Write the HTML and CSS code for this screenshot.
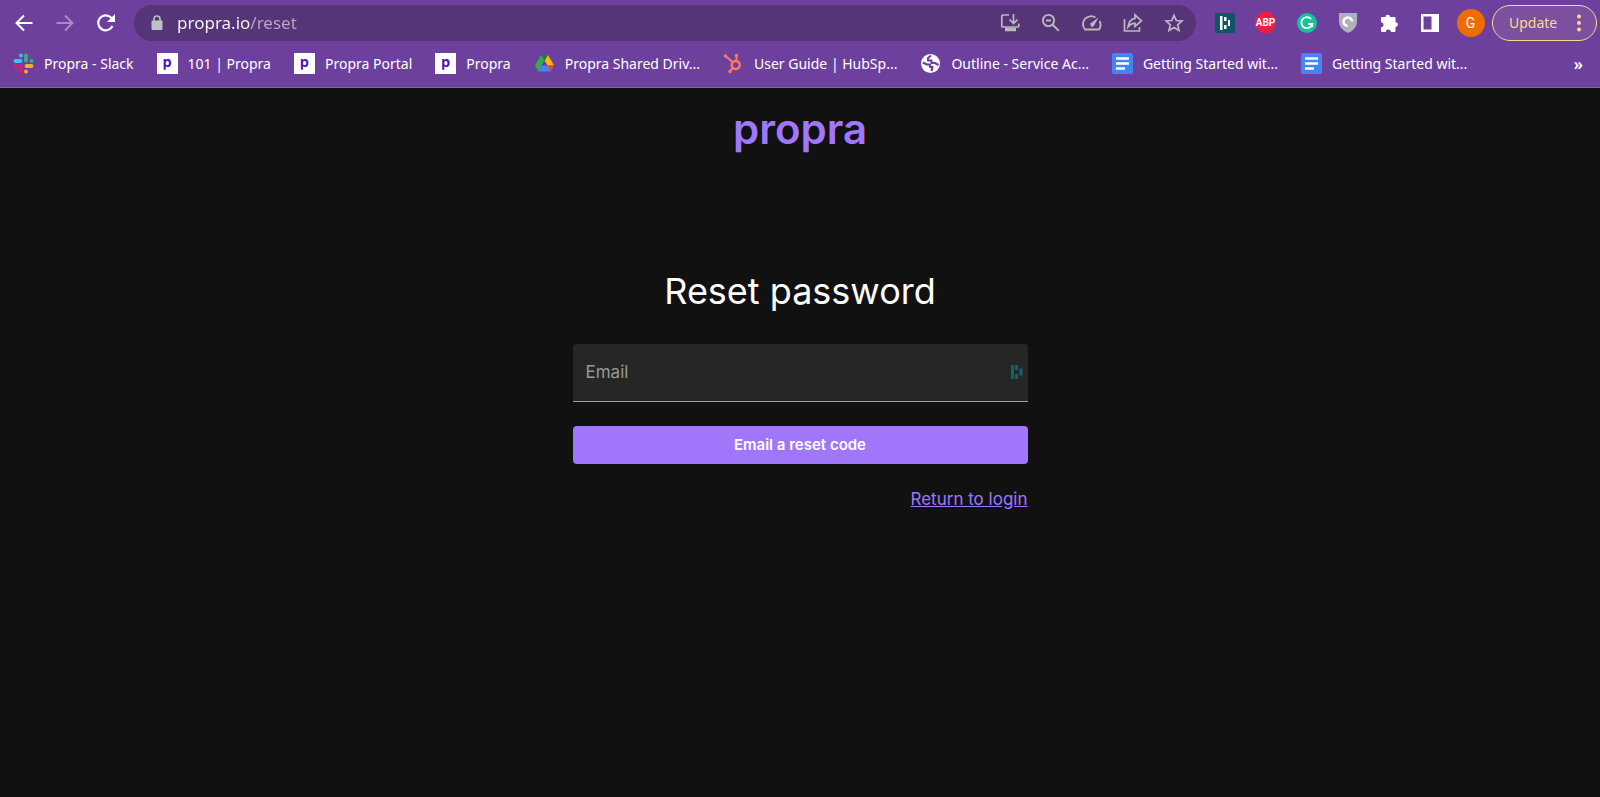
FILE: index.html
```html
<!DOCTYPE html>
<html lang="en">
  <head>
    <meta charset="UTF-8" />
    <meta name="viewport" content="width=device-width, initial-scale=1.0" />
    <title>Reset password</title>
    <link rel="stylesheet" href="styles.css">
  </head>
  <body>
    <header class="browser">
      <div class="toolbar">
        <nav class="nav-buttons">
          <button class="icon-button" aria-label="Back">
            <svg width="20" height="20" viewBox="0 0 20 20" fill="none" stroke="#fff" stroke-width="2"><path d="M18.500 10H3M10 2.500L2.500 10L10 17.500" /></svg>
          </button>
          <button class="icon-button" aria-label="Forward">
            <svg width="20" height="20" viewBox="0 0 20 20" fill="none" stroke="#a98cc5" stroke-width="2"><path d="M1.500 10H17M10 2.500L17.500 10L10 17.500" /></svg>
          </button>
          <button class="icon-button" aria-label="Reload">
            <svg width="20" height="20" viewBox="0 0 20 20"><path d="M16.500 13A7.500 7.500 0 1 1 15 4.500L17 6.500" fill="none" stroke="#fff" stroke-width="2.200" /><path d="M19 1v8h-8z" fill="#fff" /></svg>
          </button>
        </nav>

        <div class="address-bar">
          <svg class="lock" width="12" height="16" viewBox="0 0 12 16"><rect x="0.500" y="5.500" width="11" height="9.500" rx="1" fill="#bdc1c6" /><path d="M3 6V4a3 3 0 0 1 6 0v2" fill="none" stroke="#bdc1c6" stroke-width="1.600" /></svg>
          <input class="address" type="text" aria-label="Address" value="propra.io/reset" />
          <button class="icon-button" aria-label="Install">
            <svg width="20" height="20" viewBox="0 0 20 20" fill="none" stroke="#bcb8c0" stroke-width="1.700"><path d="M9 2H3Q1.800 2 1.800 3.200V13Q1.800 14 3 14H17.500Q18.800 14 18.800 13V10.500M13.500 1v9M9.500 6.500l4 4 4-4" /><path d="M5 16.500h11" stroke-width="3.500" /></svg>
          </button>
          <button class="icon-button" aria-label="Zoom">
            <svg width="20" height="20" viewBox="0 0 20 20" fill="none" stroke="#bcb8c0" stroke-width="1.900"><circle cx="7.500" cy="7.500" r="5.600" /><path d="M11.500 11.500l6.300 6.300M5 7.500h5" /></svg>
          </button>
          <button class="icon-button" aria-label="Performance">
            <svg width="20" height="20" viewBox="0 0 20 20"><path d="M13.500 4.600A8 8 0 0 0 3 16.500H17A8 8 0 0 0 17.500 8" fill="none" stroke="#bcb8c0" stroke-width="1.800" /><path d="M16.500 4.500L11.800 13a2 2 0 0 1-3-2.700z" fill="#bcb8c0" /></svg>
          </button>
          <button class="icon-button" aria-label="Share">
            <svg width="20" height="20" viewBox="0 0 20 20" fill="none" stroke="#bcb8c0" stroke-width="1.700"><path d="M1.500 6v12h15v-4M12 2l6.500 5.700L12 13.400V10.300C9 10.200 7 11.400 5 14C5.600 9.800 7.500 6 12 5.300z" /></svg>
          </button>
          <button class="icon-button" aria-label="Bookmark">
            <svg width="20" height="20" viewBox="0 0 20 20" fill="none" stroke="#bcb8c0" stroke-width="1.700"><path d="M10 2.300l2.300 5.200 5.700.5-4.300 3.800 1.300 5.600-5-3-5 3 1.300-5.600L2 8l5.700-.5z" /></svg>
          </button>
        </div>

        <div class="extensions">
          <button class="icon-button" aria-label="Dashlane">
            <svg width="20" height="20" viewBox="0 0 20 20"><rect width="20" height="20" rx="1.500" fill="#0e5566" /><path d="M5 3h2.500v14H5zM9 4h2.500v4H9zM9 12h2.500v4H9zM13 7h2v6h-2z" fill="#fff" /></svg>
          </button>
          <button class="icon-button adblock" aria-label="Adblock Plus"><span>ABP</span></button>
          <button class="icon-button" aria-label="Grammarly">
            <svg width="20" height="20" viewBox="0 0 20 20"><circle cx="10" cy="10" r="10" fill="#15c39a" /><path d="M14 6A5.500 5.500 0 1 0 15.200 11H11M15.200 10.500V14" fill="none" stroke="#fff" stroke-width="1.900" /></svg>
          </button>
          <button class="icon-button" aria-label="Shield">
            <svg width="20" height="20" viewBox="0 0 20 20"><path d="M1 0h18v9q0 7-9 11Q1 16 1 9z" fill="#adb1b9" /><path d="M14 8.500A4.200 4.200 0 1 0 9.500 12.800" fill="none" stroke="#fff" stroke-width="2.500" /></svg>
          </button>
          <button class="icon-button" aria-label="Extensions">
            <svg width="20" height="20" viewBox="0 0 20 20"><path d="M6.500 4a2.300 2.300 0 1 1 4.600 0h4.400q1 0 1 1v4.200a2.400 2.400 0 1 1 0 4.800v4q0 1-1 1h-3.700a2.500 2.500 0 0 0-5 0H3q-1 0-1-1v-3.700a2.500 2.500 0 0 0 0-5V5q0-1 1-1z" fill="#fff" /></svg>
          </button>
          <button class="icon-button" aria-label="Side panel">
            <svg width="20" height="20" viewBox="0 0 20 20"><path d="M1 1h18v18H1zM3.500 3.500v13h8v-13z" fill="#fff" fill-rule="evenodd" /></svg>
          </button>
          <button class="icon-button profile" aria-label="Profile"><span>G</span></button>
        </div>

        <button class="update">
          <span>Update</span>
          <svg width="6" height="18" viewBox="0 0 6 18" fill="#fbd990"><circle cx="3" cy="2.500" r="2" /><circle cx="3" cy="9" r="2" /><circle cx="3" cy="15.500" r="2" /></svg>
        </button>
      </div>

      <nav class="bookmarks">
        <a class="bookmark" href="#">
          <svg width="21" height="21" viewBox="0 0 21 21" fill="none" stroke-width="3.800" stroke-linecap="round"><path d="M2.500 8h5M8 2.500v0" stroke="#36c5f0" /><path d="M13 2.500v5M18.500 8v0" stroke="#2eb67d" /><path d="M13.500 13h5M13 18.500v0" stroke="#ecb22e" /><path d="M8 13.500v5M2.500 13v0" stroke="#e01e5a" /></svg>
          <span>Propra - Slack</span>
        </a>
        <a class="bookmark" href="#"><span class="favicon">p</span><span>101 | Propra</span></a>
        <a class="bookmark" href="#"><span class="favicon">p</span><span>Propra Portal</span></a>
        <a class="bookmark" href="#"><span class="favicon">p</span><span>Propra</span></a>
        <a class="bookmark" href="#">
          <svg width="21" height="21" viewBox="0 0 21 21"><path d="M7 2h7l-3.500 6-6 10.500L1 12.500z" fill="#34a853" /><path d="M7 2h7l6 10.500h-6.500z" fill="#fbbc04" /><path d="M7 2h7l-3.500 6z" fill="#188038" /><path d="M7.500 12.500L10.500 7.500l3 5z" fill="#6d409e" /><path d="M7.500 12.500H20L16.500 18.500h-12z" fill="#4285f4" /><path d="M13.500 12.500H20l-3.500 6z" fill="#ea4335" /></svg>
          <span>Propra Shared Driv...</span>
        </a>
        <a class="bookmark" href="#">
          <svg width="21" height="21" viewBox="0 0 21 21" fill="none" stroke="#ff7a59" stroke-width="2"><circle cx="12.800" cy="12" r="4" stroke-width="2.400" /><path d="M2.500 3l7.200 6M13.500 3v5M10 15l-3.500 3.500" /><path d="M2.500 3v0M13.500 2.500v0M7 18.500v0" stroke-width="3.600" stroke-linecap="round" /></svg>
          <span>User Guide | HubSp...</span>
        </a>
        <a class="bookmark" href="#">
          <svg width="21" height="21" viewBox="0 0 21 21"><circle cx="10.500" cy="10.500" r="9.500" fill="#fff" /><path d="M2.800 9.500L7 11.500h3v2.500h2.500l-1 4M11 2.500L8 5v2.500h3.500V10H15l3.500 2" fill="none" stroke="#6d409e" stroke-width="2.200" stroke-linejoin="round" /></svg>
          <span>Outline - Service Ac...</span>
        </a>
        <a class="bookmark" href="#">
          <svg width="21" height="21" viewBox="0 0 21 21"><rect width="21" height="21" rx="2" fill="#4285f4" /><path d="M4 5.500h13M4 10.500h13M4 15.500h9" stroke="#fff" stroke-width="2.500" /></svg>
          <span>Getting Started wit...</span>
        </a>
        <a class="bookmark" href="#">
          <svg width="21" height="21" viewBox="0 0 21 21"><rect width="21" height="21" rx="2" fill="#4285f4" /><path d="M4 5.500h13M4 10.500h13M4 15.500h9" stroke="#fff" stroke-width="2.500" /></svg>
          <span>Getting Started wit...</span>
        </a>
        <button class="more" aria-label="More bookmarks">»</button>
      </nav>
    </header>

    <main class="page">
      <div class="logo">propra</div>
      <form class="reset-form">
        <h1>Reset password</h1>
        <div class="field">
          <label for="email">Email</label>
          <input id="email" type="email" />
          <svg width="12" height="16" viewBox="0 0 12 16"><path d="M0 1h3v14H0zM4 1h3v5H4zM4 10h3v5H4zM8.500 4.500h3v7h-3z" fill="#0f6474" /></svg>
        </div>
        <button class="submit" type="submit">Email a reset code</button>
        <a class="login-link" href="#">Return to login</a>
      </form>
    </main>
  </body>
</html>
```

FILE: styles.css
```css
* {
  box-sizing: border-box;
}

body {
  margin: 0;
  min-height: 100vh;
  background-color: #111111;
  color: #ffffff;
  font-family: Inter, sans-serif;
}

button {
  padding: 0;
  border: none;
  background: none;
  color: inherit;
  font: inherit;
  cursor: pointer;
}

.browser {
  background-color: #6d409e;
  border-bottom: 1px solid #8661af;
  font-family: "Noto Sans", sans-serif;
}

.toolbar {
  display: flex;
  align-items: center;
  height: 45px;
  padding: 0 3px;
}

.nav-buttons,
.extensions {
  display: flex;
}

.icon-button {
  display: flex;
  justify-content: center;
  align-items: center;
  width: 41px;
  height: 36px;
}

.address-bar {
  display: flex;
  flex: 1;
  align-items: center;
  height: 36px;
  margin: 0 8px;
  padding: 0 2px 0 17px;
  border-radius: 18px;
  background-color: #553577;
}

.address {
  flex: 1;
  min-width: 0;
  margin-left: 14px;
  padding: 0;
  border: none;
  outline: none;
  color: #ffffff;
  /* host in white, path dimmed */
  background: linear-gradient(to right, #ffffff 73px, #b8a9c7 73px);
  background-clip: text;
  -webkit-background-clip: text;
  -webkit-text-fill-color: transparent;
  font-family: "Noto Sans", sans-serif;
  font-size: 17px;
}

.adblock span {
  width: 21px;
  background-color: #ed1e45;
  clip-path: polygon(30% 0, 70% 0, 100% 30%, 100% 70%, 70% 100%, 30% 100%, 0 70%, 0 30%);
  font-family: Roboto, sans-serif;
  font-size: 10px;
  font-weight: 700;
  line-height: 21px;
  text-align: center;
}

.profile span {
  width: 28px;
  border-radius: 50%;
  background-color: #ef6c00;
  font-family: Roboto, sans-serif;
  font-size: 14px;
  line-height: 28px;
  text-align: center;
}

.update {
  display: flex;
  justify-content: space-between;
  align-items: center;
  width: 105px;
  height: 36px;
  margin-left: 1px;
  padding: 0 14px 0 16px;
  border: 1px solid #fbd990;
  border-radius: 18px;
  background-color: #7b509f;
  color: #fbd990;
  font-size: 14px;
}

.bookmarks {
  display: flex;
  align-items: center;
  gap: 23px;
  height: 42px;
  padding: 0 17px 5px 13px;
}

.bookmark {
  display: flex;
  align-items: center;
  gap: 10px;
  color: #ffffff;
  font-size: 14px;
  line-height: 20px;
  text-decoration: none;
  white-space: nowrap;
}

.favicon {
  width: 21px;
  height: 21px;
  background-color: #ffffff;
  color: #4a12c4;
  font-family: Inter, sans-serif;
  font-weight: 700;
  line-height: 18px;
  text-align: center;
}

.more {
  margin-left: auto;
  font-size: 16px;
  font-weight: 600;
}

.page {
  display: flex;
  flex-direction: column;
  align-items: center;
  padding: 13px 16px 0;
}

.logo {
  color: #a077fb;
  font-size: 42px;
  font-weight: 600;
  line-height: 56px;
}

.reset-form {
  display: flex;
  flex-direction: column;
  width: 100%;
  max-width: 455px;
  margin-top: 106px;
}

h1 {
  margin: 0 0 25px;
  font-size: 36px;
  font-weight: 400;
  line-height: 56px;
  text-align: center;
}

.field {
  display: flex;
  align-items: center;
  height: 58px;
  padding: 0 5px 2px 13px;
  border-bottom: 1px solid #a0a0a0;
  border-radius: 4px 4px 0 0;
  background-color: #262626;
}

.field label {
  color: #999999;
  font-size: 17px;
}

.field input {
  flex: 1;
  min-width: 0;
  margin: 0 8px;
  border: none;
  outline: none;
  background: none;
  color: #ffffff;
  font: inherit;
}

.submit {
  height: 38px;
  margin-top: 24px;
  padding-bottom: 2px;
  border-radius: 4px;
  background-color: #a077fb;
  font-size: 15px;
  font-weight: 600;
}

.login-link {
  align-self: flex-end;
  margin-top: 23px;
  color: #a077fb;
  font-size: 17px;
  line-height: 24px;
}
```
